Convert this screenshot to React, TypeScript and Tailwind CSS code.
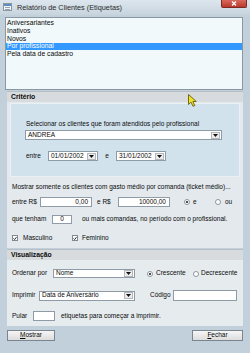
import React from "react";

const Arrow = () => (
  <svg width="5" height="3" viewBox="0 0 5 3">
    <path d="M0 0h5L2.5 3z" fill="#111" />
  </svg>
);

const Combo = ({ value, className = "" }: { value: string; className?: string }) => (
  <div className={`flex items-center bg-white border border-[#8f9ba7] ${className}`}>
    <span className="flex-1 pl-[2px] whitespace-nowrap overflow-hidden">{value}</span>
    <span className="w-[9px] h-[7px] mr-[1px] bg-[#ececec] border border-[#b4b8bc] flex items-center justify-center">
      <Arrow />
    </span>
  </div>
);

const Field = ({ value = "", className = "", right = false }: { value?: string; className?: string; right?: boolean }) => (
  <div
    className={`flex items-center bg-white border border-[#8f9ba7] ${right ? "justify-end pr-[3px]" : "justify-center"} ${className}`}
  >
    {value}
  </div>
);

const Radio = ({ on = false }: { on?: boolean }) => (
  <span className="w-[6px] h-[6px] rounded-full border border-[#8a96a2] bg-white flex items-center justify-center shrink-0">
    {on && <span className="w-[2px] h-[2px] rounded-full bg-[#111]" />}
  </span>
);

const Check = () => (
  <span className="w-[6px] h-[6px] border border-[#7f8a95] bg-white flex items-center justify-center shrink-0">
    <svg width="5" height="5" viewBox="0 0 5 5">
      <path d="M0.6 2.4L2 3.8L4.4 0.8" stroke="#111" strokeWidth="1.1" fill="none" />
    </svg>
  </span>
);

const Header = ({ label }: { label: string }) => (
  <div className="mx-[7px] h-[11px] bg-[#d7dbde] border-t border-[#b7bec4] flex items-center pl-[4px] font-bold text-[6.8px]">
    {label}
  </div>
);

const items = ["Aniversariantes", "Inativos", "Novos", "Por profissional", "Pela data de cadastro"];

export default function App() {
  return (
    <div className="w-[250px] h-[353px] relative overflow-hidden bg-[#c2d0db] flex flex-col font-['Liberation_Sans',Arial,sans-serif] text-[6.5px] text-[#0a0a0a] leading-none">
      {/* title bar */}
      <div className="h-[15px] flex items-start bg-gradient-to-b from-[#dde6ee] to-[#c7d4de]">
        <div className="mt-[3px] ml-[3px] w-[9px] h-[8px] border border-[#8a96a2] bg-[#f2f4f6] flex flex-col">
          <div className="h-[2px] bg-[#5f8fc2]" />
          <div className="mt-[1px] mx-[1px] h-[1px] bg-[#9aa5b0]" />
          <div className="mt-[1px] mx-[1px] h-[1px] bg-[#9aa5b0]" />
        </div>
        <span className="ml-[5px] mt-[3.5px] text-[7.3px] text-[#2a2a2a]">Relatório de Clientes (Etiquetas)</span>
        <div className="ml-auto mr-[3px] w-[26px] h-[8px] bg-gradient-to-b from-[#d9685c] to-[#b8392c] rounded-b-[2px] border border-t-0 border-[#7d2a22] flex items-center justify-center">
          <svg width="6" height="5" viewBox="0 0 6 5">
            <path d="M1 0.5L5 4.5M5 0.5L1 4.5" stroke="#fff" strokeWidth="1.3" />
          </svg>
        </div>
      </div>

      {/* list */}
      <div className="mt-[2px] ml-[5px] mr-[7px] h-[73px] border border-[#8a96a2] bg-[#f2f9fb] pt-[2px] text-[6.8px]">
        {items.map((t) => (
          <div
            key={t}
            className={`h-[7.6px] flex items-center pl-[1px] ${t === "Por profissional" ? "bg-[#3399ff] text-white" : ""}`}
          >
            {t}
          </div>
        ))}
      </div>

      <div className="h-[1px]" />
      <Header label="Critério" />

      {/* criteria body */}
      <div className="mx-[7px] h-[146px] bg-[#e3e9ed] flex flex-col">
        <div className="mt-[1px] mx-[3px] h-[74px] bg-[#d2e2ed] border border-[#eaf1f5] flex flex-col pl-[14px]">
          <div className="mt-[16px] h-[8px] flex items-center pl-[1px]">
            Selecionar os clientes que foram atendidos pelo profissional
          </div>
          <Combo value="ANDREA" className="mt-[2px] w-[197px] h-[10px]" />
          <div className="mt-[11px] h-[10px] flex items-center">
            <span className="w-[23px] pl-[1px]">entre</span>
            <Combo value="01/01/2002" className="w-[50px] h-[10px]" />
            <span className="w-[18px] text-center">e</span>
            <Combo value="31/01/2002" className="w-[50px] h-[10px]" />
          </div>
        </div>

        <div className="px-[5px] flex flex-col">
          <div className="mt-[6px] h-[8px] flex items-center whitespace-nowrap">
            Mostrar somente os clientes com gasto médio por comanda (ticket médio)...
          </div>
          <div className="mt-[6px] h-[10px] flex items-center">
            <span className="w-[28px]">entre R$</span>
            <Field value="0,00" right className="w-[52px] h-[10px]" />
            <span className="ml-[5px] w-[21px]">e R$</span>
            <Field value="10000,00" right className="w-[52px] h-[10px]" />
            <span className="ml-[14px]"><Radio on /></span>
            <span className="ml-[3px] w-[22px]">e</span>
            <Radio />
            <span className="ml-[4px]">ou</span>
          </div>
          <div className="mt-[8px] h-[9px] flex items-center">
            <span className="w-[40px]">que tenham</span>
            <Field value="0" className="w-[20px] h-[9px]" />
            <span className="ml-[10px] whitespace-nowrap">ou mais comandas, no período com o profissional.</span>
          </div>
          <div className="mt-[10px] h-[8px] flex items-center">
            <Check />
            <span className="ml-[5px] w-[49px]">Masculino</span>
            <Check />
            <span className="ml-[4px]">Feminino</span>
          </div>
        </div>
      </div>

      <div className="h-[1px]" />
      <Header label="Visualização" />

      {/* view body */}
      <div className="mx-[7px] h-[66px] bg-[#e6ebee] px-[5px] flex flex-col">
        <div className="mt-[9px] h-[9px] flex items-center">
          <span className="w-[41px]">Ordenar por</span>
          <Combo value="Nome" className="w-[82px] h-[9px]" />
          <span className="ml-[12px]"><Radio on /></span>
          <span className="ml-[3px] w-[37px]">Crescente</span>
          <Radio />
          <span className="ml-[2px]">Decrescente</span>
        </div>
        <div className="mt-[12px] h-[11px] flex items-center">
          <span className="w-[27px]">Imprimir</span>
          <Combo value="Data de Aniversário" className="w-[96px] h-[10px]" />
          <span className="ml-[15px] w-[23px]">Código</span>
          <Field className="w-[64px] h-[11px]" />
        </div>
        <div className="mt-[10px] h-[10px] flex items-center">
          <span className="w-[21px]">Pular</span>
          <Field className="w-[22px] h-[10px]" />
          <span className="ml-[6px] whitespace-nowrap">etiquetas para começar a imprimir.</span>
        </div>
      </div>

      {/* buttons */}
      <div className="mt-[4px] mx-[7px] h-[11px] flex justify-between">
        <button className="w-[48px] h-[11px] border border-[#7a8590] bg-gradient-to-b from-[#f6f6f6] to-[#dcdcdc] flex items-center justify-center text-[6.5px] leading-none">
          <span><span className="underline">M</span>ostrar</span>
        </button>
        <button className="w-[51px] h-[11px] border border-[#7a8590] bg-gradient-to-b from-[#f6f6f6] to-[#dcdcdc] flex items-center justify-center text-[6.5px] leading-none">
          <span><span className="underline">F</span>echar</span>
        </button>
      </div>

      {/* mouse pointer */}
      <svg className="absolute left-[188px] top-[94px]" width="10" height="13" viewBox="0 0 10 13">
        <path d="M0.5 0.5L0.5 10.5L3 8.2L5 12.3L6.8 11.5L4.9 7.5L8.3 7.5Z" fill="#efe02a" stroke="#5c4c00" strokeWidth="0.8" />
      </svg>
    </div>
  );
}
